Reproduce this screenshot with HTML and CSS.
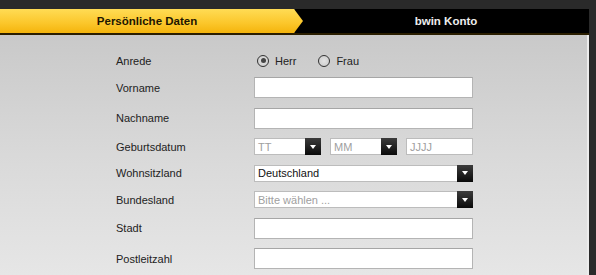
FILE: index.html
```html
<!DOCTYPE html>
<html>

<head>
    <title>Registrierung - Persönliche Daten</title>
    <link rel="stylesheet" href="styles.css">
</head>

<body>
    <div class="page">
        <div class="tab-bar">
            <div class="tab tab-active">Persönliche Daten</div>
            <div class="tab tab-next">bwin Konto</div>
        </div>
        <form class="form-panel">
            <div class="form-row row-small">
                <label>Anrede</label>
                <div class="radio-group">
                    <span class="radio checked"></span><span class="radio-text">Herr</span>
                    <span class="radio"></span><span class="radio-text">Frau</span>
                </div>
            </div>
            <div class="form-row">
                <label for="firstName">Vorname</label>
                <input type="text" id="firstName" class="text-input">
            </div>
            <div class="form-row">
                <label for="lastName">Nachname</label>
                <input type="text" id="lastName" class="text-input">
            </div>
            <div class="form-row row-select">
                <label>Geburtsdatum</label>
                <div class="date-group">
                    <div class="select-box"><span class="placeholder">TT</span><span class="drop-btn"></span></div>
                    <div class="select-box"><span class="placeholder">MM</span><span class="drop-btn"></span></div>
                    <div class="select-box"><span class="placeholder">JJJJ</span></div>
                </div>
            </div>
            <div class="form-row row-select">
                <label>Wohnsitzland</label>
                <div class="select-box wide"><span class="value">Deutschland</span><span class="drop-btn"></span></div>
            </div>
            <div class="form-row row-select">
                <label>Bundesland</label>
                <div class="select-box wide"><span class="placeholder">Bitte wählen ...</span><span class="drop-btn"></span></div>
            </div>
            <div class="form-row">
                <label for="city">Stadt</label>
                <input type="text" id="city" class="text-input">
            </div>
            <div class="form-row">
                <label for="zip">Postleitzahl</label>
                <input type="text" id="zip" class="text-input">
            </div>
        </form>
    </div>
</body>

</html>
```

FILE: styles.css
```css
body {
    margin: 0;
    background-color: #2a2a2a;
    font-family: "Liberation Sans", Arial, sans-serif;
    font-size: 11px;
    color: #222;
    overflow: hidden;
}

.page {
    width: 589px;
    height: 275px;
    box-sizing: border-box;
    padding-top: 9px;
    display: flex;
    flex-direction: column;
}

.tab-bar {
    display: flex;
    height: 24px;
    flex-shrink: 0;
    border-bottom: 2px solid #2a1e00;
}

.tab {
    display: flex;
    align-items: center;
    justify-content: center;
    font-weight: bold;
    font-size: 11.5px;
}

.tab-active {
    position: relative;
    z-index: 1;
    width: 303px;
    margin-right: -8px;
    padding-right: 9px;
    box-sizing: border-box;
    background: linear-gradient(#ffdc55, #fbc62a 60%, #f4b40c);
    clip-path: polygon(0 0, 294px 0, 303px 50%, 294px 100%, 0 100%);
    color: #1e1600;
}

.tab-next {
    flex: 1;
    padding-left: 8px;
    background-color: #000;
    color: #eee;
}

.form-panel {
    flex: 1;
    display: flex;
    flex-direction: column;
    gap: 9.5px;
    padding: 18.5px 0 0 116px;
    margin: 0;
    background: linear-gradient(#c9c9c9, #d9d9d9 50%, #e6e6e6);
    border-right: 2px solid #ececec;
    overflow: hidden;
}

.form-row {
    display: flex;
    align-items: center;
    height: 21px;
    flex-shrink: 0;
}

.form-row.row-small {
    height: 14px;
}

.form-row.row-select {
    height: 17px;
}

.form-row label {
    width: 138px;
    flex-shrink: 0;
}

.radio-group {
    display: flex;
    align-items: center;
}

.radio {
    width: 10px;
    height: 10px;
    border: 1.5px solid #333;
    border-radius: 50%;
    background: radial-gradient(#e4e4e4, #c8c8c8);
    display: flex;
    align-items: center;
    justify-content: center;
    margin-left: 3px;
}

.radio.checked::after {
    content: "";
    width: 5px;
    height: 5px;
    border-radius: 50%;
    background-color: #444;
}

.radio-text {
    margin-left: 6px;
    margin-right: 19px;
}

.text-input {
    width: 219px;
    height: 21px;
    box-sizing: border-box;
    border: 1px solid #b4b4b4;
    border-top-color: #a6a6a6;
    background-color: #fff;
    margin: 0;
    padding: 0 4px;
    font-family: inherit;
}

.date-group {
    display: flex;
    gap: 9px;
}

.select-box {
    display: flex;
    align-items: center;
    width: 67px;
    height: 17px;
    box-sizing: border-box;
    border: 1px solid #bcbcbc;
    background-color: #fff;
    padding-left: 3px;
}

.select-box.wide {
    width: 219px;
}

.placeholder {
    flex: 1;
    color: #a0a0a0;
}

.value {
    flex: 1;
    color: #111;
}

.drop-btn {
    width: 16px;
    height: 17px;
    margin-right: -1px;
    flex-shrink: 0;
    display: flex;
    align-items: center;
    justify-content: center;
    background: linear-gradient(#3c3c3c, #0a0a0a);
}

.drop-btn::after {
    content: "";
    border-left: 3px solid transparent;
    border-right: 3px solid transparent;
    border-top: 4px solid #fff;
}
```
